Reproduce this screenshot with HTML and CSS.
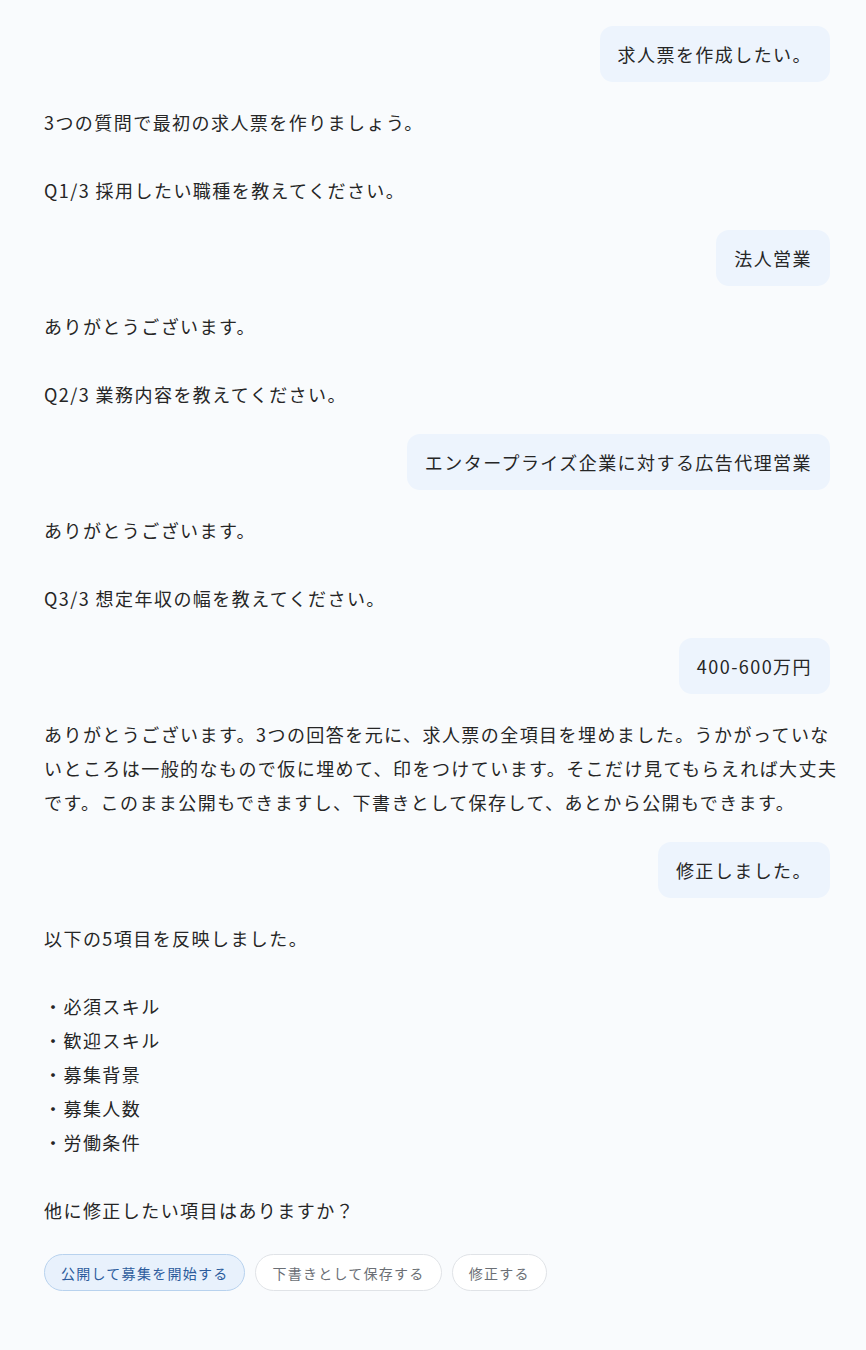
FILE: index.html
```html
<!DOCTYPE html>
<html lang="ja">
<head>
<meta charset="utf-8">
<link rel="stylesheet" href="styles.css">
</head>
<body>
<main class="chat">
  <div class="msg user"><div class="bubble">求人票を作成したい。</div></div>
  <div class="msg bot"><p>3つの質問で最初の求人票を作りましょう。</p><p class="blank"></p><p>Q1/3 採用したい職種を教えてください。</p></div>
  <div class="msg user"><div class="bubble">法人営業</div></div>
  <div class="msg bot"><p>ありがとうございます。</p><p class="blank"></p><p>Q2/3 業務内容を教えてください。</p></div>
  <div class="msg user"><div class="bubble">エンタープライズ企業に対する広告代理営業</div></div>
  <div class="msg bot"><p>ありがとうございます。</p><p class="blank"></p><p>Q3/3 想定年収の幅を教えてください。</p></div>
  <div class="msg user"><div class="bubble">400-600万円</div></div>
  <div class="msg bot"><p>ありがとうございます。3つの回答を元に、求人票の全項目を埋めました。うかがっていないところは一般的なもので仮に埋めて、印をつけています。そこだけ見てもらえれば大丈夫です。このまま公開もできますし、下書きとして保存して、あとから公開もできます。</p></div>
  <div class="msg user"><div class="bubble">修正しました。</div></div>
  <div class="msg bot">
    <p>以下の5項目を反映しました。</p>
    <p class="blank"></p>
    <p>・必須スキル</p>
    <p>・歓迎スキル</p>
    <p>・募集背景</p>
    <p>・募集人数</p>
    <p>・労働条件</p>
    <p class="blank"></p>
    <p>他に修正したい項目はありますか？</p>
    <div class="actions">
      <button class="chip primary">公開して募集を開始する</button>
      <button class="chip">下書きとして保存する</button>
      <button class="chip">修正する</button>
    </div>
  </div>
</main>
</body>
</html>
```
FILE: styles.css
```css
html, body {
  margin: 0;
  padding: 0;
  background: #f9fbfd;
}
body {
  font-family: "Noto Sans CJK JP", "Noto Sans", sans-serif;
  color: #262626;
  font-size: 18px;
  letter-spacing: 0.08em;
}
.chat {
  display: flex;
  flex-direction: column;
  gap: 23px;
  padding: 26px 36px 40px 44px;
}
.msg p {
  margin: 0;
  line-height: 34px;
  min-height: 34px;
}
.bot {
  margin-right: -14px;
}
.user {
  display: flex;
  justify-content: flex-end;
}
.bubble {
  background: #edf4fd;
  border-radius: 13px;
  padding: 11px 18px;
  line-height: 34px;
}
.actions {
  display: flex;
  gap: 10px;
  margin-top: 27px;
}
.chip {
  font-family: inherit;
  font-size: 14px;
  letter-spacing: 0.09em;
  height: 37px;
  padding: 0 16px;
  border-radius: 19px;
  border: 1px solid #e0e3e7;
  background: #ffffff;
  color: #6b6f75;
  cursor: pointer;
}
.chip.primary {
  background: #e8f1fc;
  border-color: #b8d2ee;
  color: #2c5c9c;
}
```
